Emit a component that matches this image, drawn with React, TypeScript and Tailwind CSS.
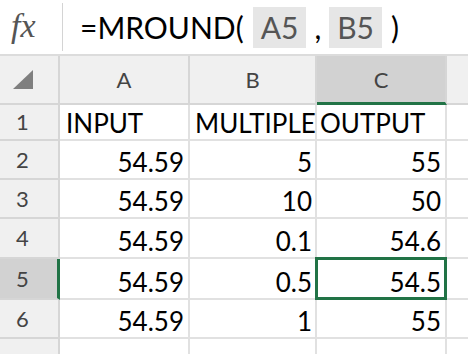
import React from 'react';

const font = { fontFamily: 'Lato, "Open Sans", sans-serif' };

const rows = [
  { n: '1', a: 'INPUT', b: 'MULTIPLE', c: 'OUTPUT', head: true, h: 'h-[36px]' },
  { n: '2', a: '54.59', b: '5', c: '55', h: 'h-[39px]' },
  { n: '3', a: '54.59', b: '10', c: '50', h: 'h-[39px]' },
  { n: '4', a: '54.59', b: '0.1', c: '54.6', h: 'h-[40px]' },
  { n: '5', a: '54.59', b: '0.5', c: '54.5', h: 'h-[41px]', sel: true },
  { n: '6', a: '54.59', b: '1', c: '55', h: 'h-[39px]' },
  { n: '', a: '', b: '', c: '', h: 'h-[20px]' },
];

function Ref({ children }: { children: React.ReactNode }) {
  return (
    <span className="inline-flex h-[41px] items-center bg-[#e6e6e6] px-[8px] text-[#555]">{children}</span>
  );
}

export default function App() {
  return (
    <div className="w-[468px] h-[354px] overflow-hidden bg-white text-black" style={font}>
      {/* Formula bar */}
      <div className="flex h-[56px] items-center border-b-2 border-[#dcdcdc]">
        <div className="flex w-[62px] h-full items-center pl-[11px] pb-[4px]">
          <span className="text-[34px] italic text-[#555]" style={{ fontFamily: '"Liberation Serif", serif' }}>
            fx
          </span>
        </div>
        <div className="h-[48px] w-[1px] bg-[#d4d4d4]" />
        <div className="flex items-center pl-[17px] text-[30px] leading-none whitespace-nowrap">
          <span>=MROUND(</span>
          <span className="w-[9px]" />
          <Ref>A5</Ref>
          <span className="px-[8px]">,</span>
          <Ref>B5</Ref>
          <span className="pl-[9px]">)</span>
        </div>
      </div>

      {/* Column headers */}
      <div className="flex h-[49px] bg-[#f0f0f0] text-[22px] text-[#444]">
        <div className="flex w-[60px] items-center border-r-2 border-b-2 border-[#d6d6d6] pl-[13px]">
          <svg width="20" height="19" viewBox="0 0 20 19">
            <polygon points="20,0 20,19 0,19" fill="#7f7f7f" />
          </svg>
        </div>
        <div className="flex w-[130px] items-center justify-center border-r-2 border-b-2 border-[#d6d6d6]">A</div>
        <div className="flex w-[127px] items-center justify-center border-r-2 border-b-2 border-[#d6d6d6]">B</div>
        <div className="flex w-[130px] items-center justify-center border-r-2 border-b-[3px] border-r-[#d6d6d6] border-b-[#217346] bg-[#d2d2d2]">
          C
        </div>
        <div className="flex-1 border-b-2 border-[#d6d6d6]" />
      </div>

      {/* Rows */}
      {rows.map((r) => (
        <div key={r.n + r.h} className={`flex ${r.h} text-[26px] leading-[30px]`}>
          <div
            className={`flex w-[60px] items-center border-b-2 border-[#d6d6d6] pl-[16px] text-[22px] text-[#444] ${
              r.sel ? 'bg-[#d2d2d2] border-r-[3px] border-r-[#217346]' : 'bg-[#f0f0f0] border-r-2'
            }`}
          >
            {r.n}
          </div>
          <div
            className={`flex w-[130px] items-end pb-[1px] border-r-2 border-b-2 border-[#e1e1e1] whitespace-nowrap ${
              r.head ? 'justify-start pl-[6px]' : 'justify-end pr-[4px]'
            }`}
          >
            {r.a}
          </div>
          <div
            className={`flex w-[127px] items-end pb-[1px] border-r-2 border-b-2 border-[#e1e1e1] whitespace-nowrap ${
              r.head ? 'justify-start pl-[5px]' : 'justify-end pr-[3px]'
            }`}
          >
            {r.b}
          </div>
          <div
            className={`relative flex w-[130px] items-end pb-[1px] border-r-2 border-b-2 border-[#e1e1e1] whitespace-nowrap ${
              r.head ? 'justify-start pl-[3px]' : 'justify-end pr-[4px]'
            }`}
          >
            {r.sel && (
              <div className="absolute left-[-2px] right-[-2px] top-[-2px] bottom-[-2px] border-[3px] border-[#217346]" />
            )}
            <span className="relative">{r.c}</span>
          </div>
          <div className="flex-1 border-b-2 border-[#e1e1e1]" />
        </div>
      ))}
    </div>
  );
}
